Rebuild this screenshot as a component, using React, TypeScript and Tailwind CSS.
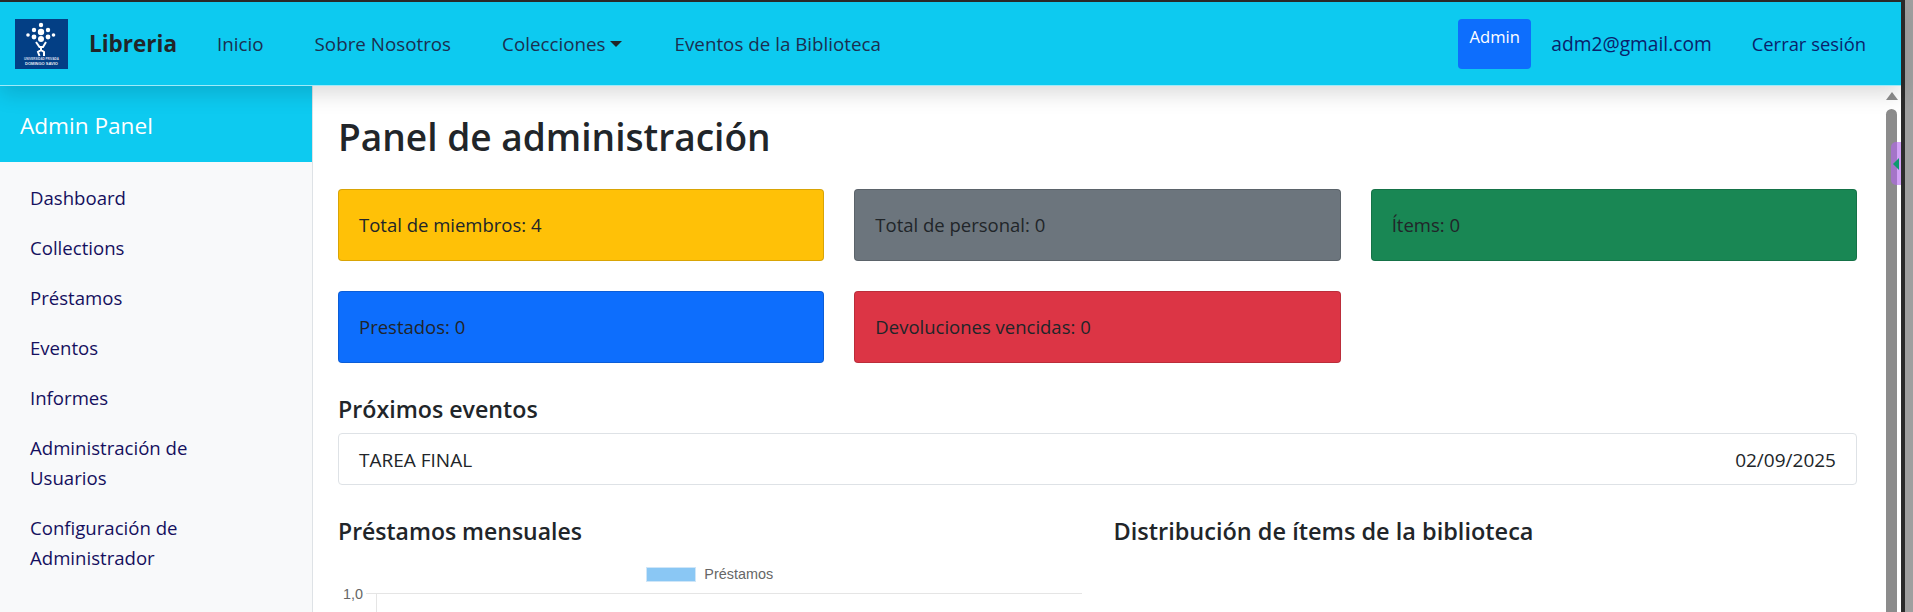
function Logo() {
  return (
    <svg width="53" height="50" viewBox="0 0 53 50" className="shrink-0">
      <rect width="53" height="50" fill="#033f85" />
      <g fill="#fff">
        <circle cx="26" cy="6" r="2.2" />
        <circle cx="19" cy="11" r="2.2" />
        <circle cx="33" cy="11" r="2.2" />
        <circle cx="26" cy="13" r="3.2" />
        <circle cx="13" cy="16" r="1.8" />
        <circle cx="19" cy="18" r="2.4" />
        <circle cx="33" cy="18" r="2.4" />
        <circle cx="38.5" cy="16" r="1.8" />
        <circle cx="26" cy="20" r="3" />
      </g>
      <path d="M21 23l3.5 5h3.5l3-5M26 27v5M26 31l-3 2 1.5 4M26 31l3 2v4" fill="none" stroke="#fff" strokeWidth="2" />
      <text x="26.5" y="41" textAnchor="middle" fontSize="3" fontWeight="700" fill="#d5deeb" fontFamily="Liberation Sans, sans-serif">UNIVERSIDAD PRIVADA</text>
      <text x="26.5" y="46" textAnchor="middle" fontSize="4" fontWeight="700" fill="#e6ecf4" fontFamily="Liberation Sans, sans-serif">DOMINGO SAVIO</text>
    </svg>
  );
}

function StatCard({ label, color }: { label: string; color: string }) {
  return (
    <div className={`h-[72px] flex items-center px-[20px] rounded-[4px] border border-black/15 text-[#212529] text-[18.5px] ${color}`}>
      {label}
    </div>
  );
}

export default function App() {
  const side = ["Dashboard", "Collections", "Préstamos", "Eventos", "Informes"];
  return (
    <div className="h-[612px] w-[1913px] overflow-hidden flex bg-white" style={{ fontFamily: '"Open Sans","Noto Sans",sans-serif' }}>
      <div className="w-[1901px] flex flex-col h-full border-t-2 border-[#2b2b2b]">
        <nav className="h-[84px] shrink-0 bg-[#0dcaf0] border-b border-white/60 flex items-center pl-[15px] pr-[35px] text-[18.8px] text-[#1b2f50] relative z-10 shadow-[0_8px_20px_rgba(0,0,0,0.14)]">
          <Logo />
          <span className="ml-[21px] text-[22.5px] font-bold text-[#212529]">Libreria</span>
          <div className="ml-[40px] flex items-center gap-[51px] pt-[1px]">
            <span>Inicio</span>
            <span>Sobre Nosotros</span>
            <span className="flex items-center gap-[4px] mr-[2px]">Colecciones<span className="w-0 h-0 border-x-[6px] border-x-transparent border-t-[6px] border-t-[#212529]" /></span>
            <span>Eventos de la Biblioteca</span>
          </div>
          <div className="ml-auto flex items-center text-[#0a1f6b]">
            <span className="w-[73px] h-[50px] rounded-[4px] bg-[#0d6efd] text-white text-[16.6px] text-center pt-[6px]">Admin</span>
            <span className="ml-[20px] text-[19.2px] pt-[1px]">adm2@gmail.com</span>
            <span className="ml-[40px] text-[18.4px] pt-[1px]">Cerrar sesión</span>
          </div>
        </nav>
        <div className="flex flex-1 min-h-0 relative">
          <aside className="w-[313px] shrink-0 bg-[#f8f9fa] border-r border-[#dee2e6]">
            <div className="h-[76px] bg-[#0dcaf0] text-white text-[22.6px] flex items-center pl-[20px] pt-[3px]">Admin Panel</div>
            <ul className="pt-[21px] pl-[30px] pr-[60px] text-[18.6px] leading-[30px] text-[#15105e]">
              {side.map((s) => (
                <li key={s} className="mb-[20px]">{s}</li>
              ))}
              <li className="mb-[20px]">Administración de Usuarios</li>
              <li>Configuración de Administrador</li>
            </ul>
          </aside>
          <main className="flex-1 min-w-0 pl-[25px] pr-[44px] relative">
            <h1 className="relative pt-[28px] text-[37.1px] leading-[46px] font-semibold text-[#212529]">Panel de administración</h1>
            <div className="grid grid-cols-3 gap-x-[30px] gap-y-[30px] mt-[29px]">
              <StatCard label="Total de miembros: 4" color="bg-[#ffc107]" />
              <StatCard label="Total de personal: 0" color="bg-[#6c757d]" />
              <StatCard label="Ítems: 0" color="bg-[#198754]" />
              <StatCard label="Prestados: 0" color="bg-[#0d6efd]" />
              <StatCard label="Devoluciones vencidas: 0" color="bg-[#dc3545]" />
            </div>
            <h2 className="mt-[30px] text-[23.2px] leading-[32px] font-semibold text-[#212529]">Próximos eventos</h2>
            <div className="mt-[8px] h-[52px] flex items-center justify-between px-[20px] pt-[2px] border border-[#dee2e6] rounded-[4px] text-[19px] text-[#212529]">
              <span>TAREA FINAL</span>
              <span>02/09/2025</span>
            </div>
            <div className="grid grid-cols-2 gap-[32px] mt-[30px]">
              <div>
                <h2 className="text-[23px] leading-[32px] font-semibold text-[#212529]">Préstamos mensuales</h2>
                <div className="relative mt-[17px] h-[60px]">
                  <div className="flex items-center justify-center gap-[8px] text-[14.4px] text-[#666]" style={{ fontFamily: '"Liberation Sans",sans-serif' }}>
                    <span className="w-[50px] h-[15px] bg-[#8ac7f4] border border-[#cfe6f8]" />
                    <span>Préstamos</span>
                  </div>
                  <div className="absolute left-[5px] top-[20px] text-[14.4px] text-[#666]" style={{ fontFamily: '"Liberation Sans",sans-serif' }}>1,0</div>
                  <div className="absolute left-[28px] right-0 top-[29px] border-t border-[#e5e5e5]" />
                  <div className="absolute left-[38px] top-[29px] h-[30px] border-l border-[#e5e5e5]" />
                </div>
              </div>
              <div>
                <h2 className="text-[23.5px] leading-[32px] font-semibold text-[#212529]">Distribución de ítems de la biblioteca</h2>
              </div>
            </div>
            <div className="absolute right-[4px] top-[6px] bottom-0 w-[11px] flex flex-col items-center">
              <span className="w-0 h-0 border-x-[6px] border-x-transparent border-b-[8px] border-b-[#8c8c8c]" />
              <span className="mt-[9px] flex-1 w-[11px] rounded-t-[6px] bg-[#8c8c8c]" />
            </div>
            <div className="absolute right-0 top-[56px] w-[10px] h-[43px] rounded-l-[5px] bg-[#b464f099] flex items-center justify-end pr-[2px]">
              <span className="w-0 h-0 border-y-[6px] border-y-transparent border-r-[6px] border-r-[#0d9a6e]" />
            </div>
          </main>
        </div>
      </div>
      <div className="w-[4px] bg-[#2b2b2b]" />
      <div className="w-[8px] bg-[#9f9f9f]" />
    </div>
  );
}
